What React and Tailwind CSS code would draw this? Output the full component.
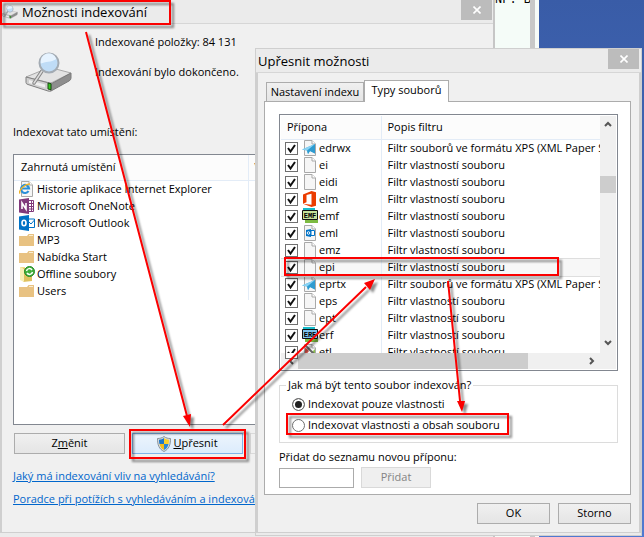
import React from "react";

const folderColor = "#e8c282";

function PageIcon({ children }) {
    return (
        <svg width="16" height="16" viewBox="0 0 16 16" className="shrink-0">
            <path d="M2.500.5h7.500l3.500 3.500v11.500h-11z" fill="#f6f6f6" stroke="#a9a9a9" />
            <path d="M10 .5v3.500h3.500" fill="#fff" stroke="#a9a9a9" />
            {children}
        </svg>
    );
}

function FileIcon({ type }) {
    if (type === "edrawings") {
        return (
            <PageIcon>
                <path d="M0 9.500L13 4v9.500L8 11l-2 3-1-3.500z" fill="#45b3e6" />
                <path d="M13 4L5 10.500l1 3.500 2-3 5 2.500z" fill="#2f9bd0" />
                <path d="M0 9.500L13 4 5 10.500z" fill="#8bd2f2" />
            </PageIcon>
        );
    }
    if (type === "office") {
        return (
            <svg width="16" height="16" viewBox="0 0 16 16" className="shrink-0">
                <path d="M1 3.500L9.500 0l4.500 1.200v13.600L9.500 16 1 12.800l8.500 1V2.800L4.500 4v7.300L1 12.700z" fill="#eb3c00" />
            </svg>
        );
    }
    if (type === "emf" || type === "erf") {
        return (
            <svg width="16" height="16" viewBox="0 0 16 16" className="shrink-0">
                <path d="M1 0h12v4H1z" fill="#18bccb" />
                <path d="M3 12h13v3H3z" fill="#7dbb42" />
                <path d="M.5 2.500h15v9H.5z" fill={type === "emf" ? "#c5e39a" : "#7cc3ee"} stroke="#111" />
                <text x="8" y="9.500" textAnchor="middle" fontSize="7" fontWeight="700" fontFamily="Liberation Mono, monospace">
                    {type.toUpperCase()}
                </text>
            </svg>
        );
    }
    if (type === "mail") {
        return (
            <PageIcon>
                <path d="M4 5l5-1v8l-5-1z" fill="#0072c6" />
                <path d="M9 5.500h3.500v5H9z" fill="#fff" stroke="#0072c6" />
                <circle cx="6.500" cy="8" r="1.300" fill="none" stroke="#fff" />
            </PageIcon>
        );
    }
    if (type === "trace") {
        return (
            <PageIcon>
                <path d="M3 3l4 4-4 5z" fill="#d9534a" />
                <path d="M5 13l8-8v8z" fill="#8cc152" />
                <path d="M3 1l10 10" stroke="#666" strokeWidth="2" />
            </PageIcon>
        );
    }
    return <PageIcon />;
}

function LocationIcon({ type }) {
    if (type === "ie") {
        return (
            <PageIcon>
                <path d="M9.500 10A4 4 0 1 1 10 7.500H3" fill="none" stroke="#2a8fd8" strokeWidth="2.200" />
                <path d="M1 12.500C-1 9.500 6 2.500 11 3" fill="none" stroke="#f0b428" strokeWidth="1.400" />
            </PageIcon>
        );
    }
    if (type === "onenote") {
        return (
            <svg width="16" height="16" viewBox="0 0 16 16" className="shrink-0">
                <path d="M9 2.500h5.500v11H9M9 5.500h5M9 8.500h5M9 11h5M12.500 2v12" fill="#fff" stroke="#80397b" />
                <path d="M0 1.500L10 0v16L0 14.500z" fill="#80397b" />
                <path d="M3 11V5l4 6V5" fill="none" stroke="#fff" strokeWidth="1.600" />
            </svg>
        );
    }
    if (type === "outlook") {
        return (
            <svg width="16" height="16" viewBox="0 0 16 16" className="shrink-0">
                <path d="M9 4h6.500v8.500H9M9 6l3 3 3.500-4" fill="#fff" stroke="#0072c6" />
                <path d="M0 1.500L10 0v16L0 14.500z" fill="#0072c6" />
                <ellipse cx="5" cy="8" rx="2" ry="2.800" fill="none" stroke="#fff" strokeWidth="1.600" />
            </svg>
        );
    }
    if (type === "offline") {
        return (
            <svg width="16" height="16" viewBox="0 0 16 16" className="shrink-0">
                <path d="M1 1h5v13H1z" fill="#f0dc8c" />
                <path d="M4 2l9 1v12l-9 1z" fill="#dfc15e" />
                <path d="M1 1l4 2v13l-4-2z" fill="#f8eeb5" />
                <circle cx="10.500" cy="5.500" r="5" fill="#3fae3a" stroke="#268a28" />
                <path d="M7.500 5A3 3 0 0 1 13 4M13.500 6A3 3 0 0 1 8 7" fill="none" stroke="#fff" strokeWidth="1.500" />
            </svg>
        );
    }
    return (
        <svg width="16" height="16" viewBox="0 0 16 16" className="shrink-0">
            <path d="M0 4h8l1.500-2H15v12H0z" fill={folderColor} />
            <path d="M10 3.500h4" stroke="#f9edd2" />
        </svg>
    );
}

function DriveIcon({ className }) {
    return (
        <svg viewBox="0 0 48 40" className={className}>
            <path d="M1 25l22-9q2-.6 4 0l19 5-19 9.500q-2 .6-4 0z" fill="#e3e3e3" stroke="#a8a8a8" />
            <path d="M1 25l23 6q2 .4 2 2v6q-1 .6-3 0L3 32.500q-2-.5-2-2z" fill="#cfcfcf" stroke="#808080" />
            <path d="M26 32l20-11v5q0 2-2 3l-18 10z" fill="#8e8e8e" stroke="#7a7a7a" />
            <path d="M4 28l16 4.500v3L4 31z" fill="#efefef" />
            <path d="M23 31l3 .7v6l-3-.7z" fill="#36c41e" stroke="#1b4d14" />
            <path d="M17 19L9 31" stroke="#858585" strokeWidth="3.500" strokeLinecap="round" />
            <path d="M17 19L9 31" stroke="#dcdcdc" strokeWidth="1.500" strokeLinecap="round" />
            <circle cx="24" cy="11" r="9.500" fill="#bfdcf6" stroke="#a3abb3" strokeWidth="2" />
            <path d="M16 11.500C20 9.500 26 10.500 31.500 7a8 8 0 0 0-15.500 4.500z" fill="#e6f3ff" />
        </svg>
    );
}

function ShieldIcon() {
    return (
        <svg width="14" height="16" viewBox="0 0 14 16" className="shrink-0">
            <path d="M7 .5c2 1.500 4 2 6.500 2C13.500 9 12 13 7 15.500 2 13 .5 9 .5 2.500 3 2.500 5 2 7 .5z" fill="#d5dde3" stroke="#8b949b" />
            <path d="M7 2C5.500 3 4 3.500 2 3.700 2 5.500 2.100 6.800 2.500 8H7z" fill="#1f78c8" />
            <path d="M7 2c1.500 1 3 1.500 5 1.700 0 1.800-.1 3.100-.5 4.300H7z" fill="#fbd12d" />
            <path d="M2.500 8C3.200 11 4.500 12.800 7 14V8z" fill="#f5bd1b" />
            <path d="M11.500 8c-.7 3-2 4.800-4.500 6V8z" fill="#2c86d4" />
        </svg>
    );
}

function CloseButton() {
    return (
        <button aria-label="Zavřít" className="flex h-5 w-[31px] shrink-0 items-center justify-center bg-[#bcbcbc]">
            <svg width="8" height="8" viewBox="0 0 8 8">
                <path d="M.5.5l7 7M7.500.5l-7 7" stroke="#fff" strokeWidth="1.600" />
            </svg>
        </button>
    );
}

function Chevron({ d }) {
    return (
        <svg width="8" height="8" viewBox="0 0 8 8">
            <path d={d} fill="none" stroke="#555" strokeWidth="2" />
        </svg>
    );
}

const locations = [
    { name: "Historie aplikace Internet Explorer", icon: "ie" },
    { name: "Microsoft OneNote", icon: "onenote" },
    { name: "Microsoft Outlook", icon: "outlook" },
    { name: "MP3", icon: "folder" },
    { name: "Nabídka Start", icon: "folder" },
    { name: "Offline soubory", icon: "offline" },
    { name: "Users", icon: "folder" },
];

const XPS = "Filtr souborů ve formátu XPS (XML Paper S";
const PROPS = "Filtr vlastností souboru";

const fileTypes = [
    { ext: "edrwx", filter: XPS, icon: "edrawings" },
    { ext: "ei", filter: PROPS },
    { ext: "eidi", filter: PROPS },
    { ext: "elm", filter: PROPS, icon: "office" },
    { ext: "emf", filter: PROPS, icon: "emf" },
    { ext: "eml", filter: PROPS, icon: "mail" },
    { ext: "emz", filter: PROPS },
    { ext: "epi", filter: PROPS, active: true },
    { ext: "eprtx", filter: XPS, icon: "edrawings" },
    { ext: "eps", filter: PROPS },
    { ext: "ept", filter: PROPS },
    { ext: "erf", filter: PROPS, icon: "erf" },
    { ext: "etl", filter: PROPS, icon: "trace" },
];

function IndexingWindow() {
    return (
        <section className="absolute top-0 left-0 flex h-full w-[495px] flex-col border-r-2 border-[#c6c6c6] bg-[#ebebeb]">
            <header className="flex h-6 items-start border-b border-[#d6d6d6] pr-px">
                <DriveIcon className="mt-1 ml-0.5 h-4 w-4" />
                <h1 className="ml-1 flex-1 text-[13px] leading-6">Možnosti indexování</h1>
                <CloseButton />
            </header>
            <div className="mb-1 flex-1 border-b border-l-2 border-[#cfcfcf] bg-[#f0f0f0] pt-2 pl-[11px]">
                <div className="flex h-24">
                    <DriveIcon className="mt-5 ml-3 h-10 w-12" />
                    <div className="ml-[22px] pt-0.5">
                        <p className="leading-4">Indexované položky: 84 131</p>
                        <p className="mt-3.5 leading-4">Indexování bylo dokončeno.</p>
                    </div>
                </div>
                <p className="-mt-1.5 leading-5">Indexovat tato umístění:</p>
                <div className="mt-3 mr-3 h-[271px] border border-[#828790] bg-white">
                    <table className="w-full table-fixed border-collapse">
                        <thead>
                            <tr className="h-[25px] border-b border-[#e3ecf7] bg-[#fcfcfc]">
                                <th className="w-[234px] border-r border-[#e3ecf7] pl-[7px] text-left font-normal">Zahrnutá umístění</th>
                                <th className="pl-1.5 text-left font-normal">Vyloučit</th>
                            </tr>
                        </thead>
                        <tbody>
                            {locations.map(({ name, icon }) => (
                                <tr key={name} className="h-[17px]">
                                    <td className="border-r border-[#e3ecf7] p-0 pl-[5px]">
                                        <div className="flex h-[17px] items-center gap-0.5 whitespace-nowrap">
                                            <LocationIcon type={icon} />
                                            {name}
                                        </div>
                                    </td>
                                    <td />
                                </tr>
                            ))}
                        </tbody>
                    </table>
                </div>
                <div className="mt-2 ml-px flex gap-[7px]">
                    <button className="h-[21px] w-[111px] border border-[#acacac] bg-linear-to-b from-[#f0f0f0] to-[#e5e5e5]">
                        Z<u>m</u>ěnit
                    </button>
                    <button className="flex h-[21px] w-[111px] items-center justify-center gap-0.5 border border-[#7eb4ea] bg-linear-to-b from-[#ecf4fc] to-[#dcecfc]">
                        <ShieldIcon />
                        <span><u>U</u>přesnit</span>
                    </button>
                    <button className="h-[21px] w-[111px] border border-[#d9d9d9] text-[#838383]">Pozastavit</button>
                </div>
                <div className="mt-3.5 flex flex-col items-start gap-[7px] leading-4 text-[#0066cc]">
                    <a href="#vliv" className="underline">Jaký má indexování vliv na vyhledávání?</a>
                    <a href="#poradce" className="underline">Poradce při potížích s vyhledáváním a indexováním</a>
                </div>
            </div>
        </section>
    );
}

function FileTypeList() {
    return (
        <div className="flex h-[257px] flex-col border border-[#828790] bg-white p-px">
            <div className="flex min-h-0 flex-1">
                <div className="min-w-0 flex-1 overflow-hidden">
                    <table className="w-full table-fixed border-collapse">
                        <thead>
                            <tr className="h-[23px] border-b border-[#e3ecf7] bg-[#fcfcfc]">
                                <th className="w-[100px] border-r border-[#e3ecf7] pl-1.5 text-left font-normal">Přípona</th>
                                <th className="pl-1.5 text-left font-normal">Popis filtru</th>
                            </tr>
                        </thead>
                        <tbody>
                            {fileTypes.map(({ ext, filter, icon, active }) => (
                                <tr key={ext} className={active ? "h-[17px] bg-[#f7f7f7] outline outline-[#dedede]" : "h-[17px]"}>
                                    <td className="border-r border-[#e3ecf7] p-0 pl-1">
                                        <label className="flex h-[17px] items-center">
                                            <input
                                                type="checkbox"
                                                defaultChecked
                                                className="peer absolute h-[13px] w-[13px] appearance-none border border-[#707070] bg-white"
                                            />
                                            <svg width="13" height="13" viewBox="0 0 13 13" className="pointer-events-none relative mr-1 shrink-0">
                                                <path d="M3 6l2.500 3.500L10 3" fill="none" stroke="#111" strokeWidth="2" />
                                            </svg>
                                            <FileIcon type={icon} />
                                            <span className="ml-px">{ext}</span>
                                        </label>
                                    </td>
                                    <td className="overflow-hidden p-0 pl-1.5 leading-4 whitespace-nowrap">{filter}</td>
                                </tr>
                            ))}
                        </tbody>
                    </table>
                </div>
                <div className="flex w-4 flex-col items-center justify-between bg-[#f0f0f0] pt-1 pb-1.5">
                    <Chevron d="M1 6l3-3 3 3" />
                    <div className="mt-12 mb-auto h-[17px] w-full bg-[#cdcdcd]" />
                    <Chevron d="M1 2l3 3 3-3" />
                </div>
            </div>
            <div className="flex h-4 items-center bg-[#f0f0f0] pr-5 pl-1.5">
                <Chevron d="M6 1L3 4l3 3" />
                <div className="mr-auto ml-[3px] h-4 w-[230px] bg-[#cdcdcd]" />
                <Chevron d="M2 1l3 3-3 3" />
            </div>
        </div>
    );
}

function AdvancedWindow() {
    return (
        <section className="absolute top-12 left-[255px] w-[387px] border border-[#cfcfcf] bg-[#ebebeb]">
            <header className="flex h-6 items-start border-b border-[#d6d6d6] pr-0.5 pl-0.5">
                <h2 className="flex-1 text-[13px] leading-6">Upřesnit možnosti</h2>
                <CloseButton />
            </header>
            <div className="mb-0.5 border-x-2 border-b border-[#cfcfcf] bg-[#f0f0f0] pt-[7px] pr-2 pb-2 pl-1.5">
                <div role="tablist" className="flex items-end pl-0.5">
                    <button role="tab" className="h-[19px] w-[98px] border border-b-0 border-[#acacac] bg-linear-to-b from-[#f0f0f0] to-[#e5e5e5]">
                        Nastavení indexu
                    </button>
                    <button role="tab" aria-selected="true" className="relative -mb-px h-[22px] w-[85px] border border-b-0 border-[#acacac] bg-white pb-0.5">
                        Typy souborů
                    </button>
                </div>
                <div className="border border-[#acacac] bg-white pt-3 pr-3 pb-1.5 pl-3.5">
                    <FileTypeList />
                    <fieldset className="mt-1.5 h-[66px] border border-[#dcdcdc] px-3">
                        <legend className="-ml-1.5 px-0.5 leading-4">Jak má být tento soubor indexován?</legend>
                        <label className="mt-px flex h-5 items-center gap-[3px]">
                            <input
                                type="radio"
                                name="mode"
                                defaultChecked
                                className="h-[13px] w-[13px] appearance-none rounded-full border border-[#707070] bg-white checked:bg-[#222] checked:shadow-[inset_0_0_0_2px_white]"
                            />
                            Indexovat pouze vlastnosti
                        </label>
                        <label className="flex h-[22px] items-center gap-[3px]">
                            <input
                                type="radio"
                                name="mode"
                                className="h-[13px] w-[13px] appearance-none rounded-full border border-[#707070] bg-white checked:bg-[#222] checked:shadow-[inset_0_0_0_2px_white]"
                            />
                            Indexovat vlastnosti a obsah souboru
                        </label>
                    </fieldset>
                    <label htmlFor="ext" className="mt-1.5 block leading-4">Přidat do seznamu novou příponu:</label>
                    <div className="mt-0.5 flex items-center gap-[7px]">
                        <input id="ext" type="text" className="h-5 w-[75px] border border-[#ababab] bg-white px-1" />
                        <button disabled className="h-[21px] w-[70px] border border-[#d9d9d9] bg-[#efefef] text-[#838383]">Přidat</button>
                    </div>
                </div>
                <div className="mt-2 flex justify-end gap-2">
                    <button className="h-[21px] w-[73px] border border-[#acacac] bg-linear-to-b from-[#f0f0f0] to-[#e5e5e5]">OK</button>
                    <button className="h-[21px] w-[73px] border border-[#acacac] bg-linear-to-b from-[#f0f0f0] to-[#e5e5e5]">Storno</button>
                </div>
            </div>
        </section>
    );
}

// Red boxes and arrows showing the click path
function Annotations() {
    return (
        <svg
            width="644"
            height="537"
            viewBox="0 0 644 537"
            className="pointer-events-none absolute top-0 left-0 drop-shadow-[3px_3px_1px_rgba(0,0,0,0.45)]"
        >
            <g fill="none" stroke="#fb0000" strokeWidth="2">
                <rect x="1" y="1" width="169" height="23" />
                <rect x="130" y="430" width="115" height="28" />
                <rect x="285" y="258" width="273" height="17" />
                <rect x="287" y="414" width="221" height="20" />
                <path d="M86 32L187 416M223 425L366 287M448 281L460 401" />
            </g>
            <g fill="#fb0000">
                <path d="M190 427l-7-11 8-2z" />
                <path d="M375 279l-5 11-6-7z" />
                <path d="M462 412l-5-11h8z" />
            </g>
        </svg>
    );
}

export default function App() {
    return (
        <main className="relative h-screen w-full overflow-hidden bg-linear-to-b from-[#395ca7] to-[#5079d0] font-['Open_Sans','Noto_Sans',sans-serif] text-[11px] text-black">
            {/* Text editor behind the dialogs */}
            <div className="absolute top-0 left-[495px] h-full w-11 border-r-4 border-[#f6fbf8] bg-[#f5fcf8]">
                <div className="h-full overflow-hidden border-r-[5px] border-[#c8c8c8]">
                    <p className="-mt-2 font-['Liberation_Mono',monospace] text-[12px] leading-4 whitespace-nowrap">NF. B</p>
                </div>
            </div>
            <IndexingWindow />
            <AdvancedWindow />
            <Annotations />
        </main>
    );
}
